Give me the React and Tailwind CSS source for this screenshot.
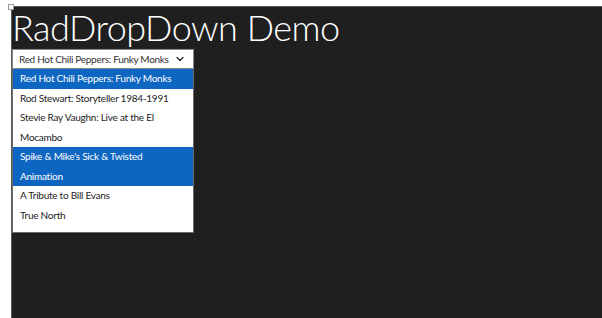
import { ChevronDown } from "lucide-react";

const items = [
  { label: "Red Hot Chili Peppers: Funky Monks", selected: true },
  { label: "Rod Stewart: Storyteller 1984-1991" },
  { label: "Stevie Ray Vaughn: Live at the El Mocambo" },
  { label: "Spike & Mike's Sick & Twisted Animation", selected: true },
  { label: "A Tribute to Bill Evans" },
  { label: "True North" },
];

const App = () => {
  return (
    <div className="w-[602px] h-[318px] bg-white overflow-hidden relative" style={{ fontFamily: 'Lato, "Open Sans", sans-serif' }}>
      <div className="absolute left-[8px] top-[4px] w-[6px] h-[6px] bg-white border border-[#9a9a9a] z-10"></div>
      <div className="ml-[11px] mt-[6px] h-[312px] bg-[#1f1f1f] border-t border-l border-[#5a5a5a] pl-[1px]">
        <h1 className="text-[36px] font-light text-white leading-[42px] tracking-[-0.5px] ml-[-1px] mt-[-1px]">RadDropDown Demo</h1>
        <div className="w-[182px] mt-[1px] ml-[-1px]">
          <div className="h-[20px] bg-white border border-[#8a8a8a] flex items-center justify-between pl-[6px] pr-[7px]">
            <span className="text-[10px] tracking-[-0.3px] text-[#333] whitespace-nowrap">Red Hot Chili Peppers: Funky Monks</span>
            <ChevronDown size={12} strokeWidth={2.5} className="text-[#222]" />
          </div>
          <div className="bg-white border-l border-r border-b border-[#6a6a6a] pb-[7px]">
            {items.map((item, idx) => (
              <div
                key={idx}
                className={`pl-[7px] pr-[10px] text-[10px] tracking-[-0.25px] leading-[19.5px] ${item.selected ? "bg-[#0d66c2] text-white" : "text-[#222]"}`}
              >
                {item.label}
              </div>
            ))}
          </div>
        </div>
      </div>
    </div>
  );
};

export default App;
